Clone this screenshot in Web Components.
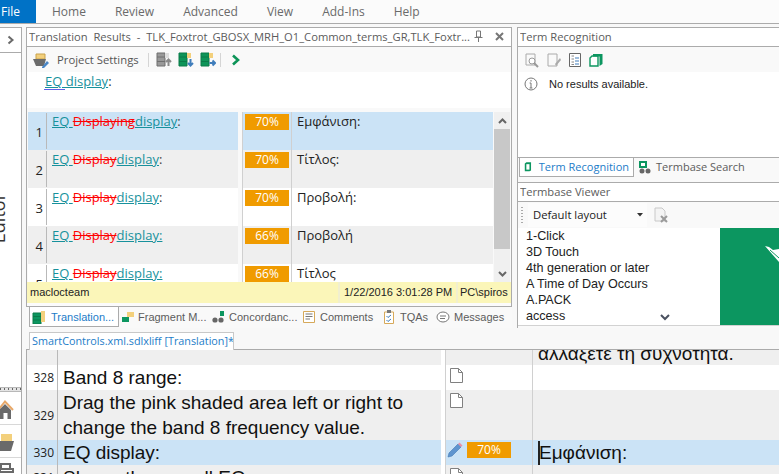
<!DOCTYPE html>
<html>
<head>
<meta charset="utf-8">
<title>Translation Results</title>
<style>
  html, body { margin: 0; height: 100%; overflow: hidden; background: #f8f8f8; }
  body { font-family: "Open Sans", "Noto Sans", sans-serif; font-size: 12px; color: #1e1e1e; }
</style>
</head>
<body>
<app-shell>
  <app-ribbon slot="ribbon"></app-ribbon>
  <side-rail slot="rail"></side-rail>
  <results-panel slot="results"></results-panel>
  <term-panel slot="term"></term-panel>
  <bottom-tabs slot="tabs"></bottom-tabs>
  <doc-tab slot="doc">SmartControls.xml.sdlxliff [Translation]*</doc-tab>
  <editor-grid slot="editor">
    <seg-row h="15" n="" tgt="αλλάξετε τη συχνότητα." tone="gray" clipped></seg-row>
    <seg-row h="25" n="328" src="Band 8 range:" tone="white" doc></seg-row>
    <seg-row h="50" n="329" src="Drag the pink shaded area left or right to change the band 8 frequency value." tone="gray" doc></seg-row>
    <seg-row h="25" n="330" src="EQ display:" tgt="Εμφάνιση:" tone="blue" active></seg-row>
    <seg-row h="25" n="331" src="Shows the overall EQ" tone="gray" doc></seg-row>
  </editor-grid>
</app-shell>

<script>
const SAMPLE_DIFF = (del, tail) => `<u>EQ </u><s>${del}</s><u>display${tail ? ':' : ''}</u>${tail ? '' : ':'}`
const NARROW = '"Liberation Sans", Arial, sans-serif'

class AppShell extends HTMLElement {
  constructor() {
    super()
    this.attachShadow({ mode: 'open' }).innerHTML = `
      <style>
        :host { display: grid; width: 779px; height: 474px; overflow: hidden;
          grid-template-columns: 26px 491px 262px;
          grid-template-rows: 24px 3px 279px 22px 22px 1fr; }
        .ribbon { grid-column: 1 / -1; grid-row: 1; }
        .rail { grid-column: 1; grid-row: 3 / -1; min-height: 0; }
        .results { grid-column: 2; grid-row: 3; min-height: 0; }
        .term { grid-column: 3; grid-row: 3 / 5; min-height: 0; }
        .tabs { grid-column: 2; grid-row: 4; }
        .doc { grid-column: 2 / -1; grid-row: 5; }
        .editor { grid-column: 2 / -1; grid-row: 6; min-height: 0; }
      </style>
      <div class="ribbon"><slot name="ribbon"></slot></div>
      <div class="rail"><slot name="rail"></slot></div>
      <div class="results"><slot name="results"></slot></div>
      <div class="term"><slot name="term"></slot></div>
      <div class="tabs"><slot name="tabs"></slot></div>
      <div class="doc"><slot name="doc"></slot></div>
      <div class="editor"><slot name="editor"></slot></div>`
  }
}

class AppRibbon extends HTMLElement {
  constructor() {
    super()
    const items = ['Home', 'Review', 'Advanced', 'View', 'Add-Ins', 'Help']
    this.attachShadow({ mode: 'open' }).innerHTML = `
      <style>
        :host { display: flex; height: 24px; box-sizing: border-box; background: #fbfbfb;
          border-bottom: 1px solid #ababab; font-size: 12px; color: #6a6a6a; }
        .file { width: 36px; height: 23px; background: #0072c6; color: #fff; line-height: 23px;
          padding-left: 1px; box-sizing: border-box; overflow: hidden; }
        nav { display: flex; margin-left: 16px; gap: 29px; line-height: 23px; }
      </style>
      <div class="file">File</div>
      <nav>${items.map(i => `<span>${i}</span>`).join('')}</nav>`
  }
}

class SideRail extends HTMLElement {
  constructor() {
    super()
    this.attachShadow({ mode: 'open' }).innerHTML = `
      <style>
        :host { display: block; height: 100%; }
        .col { width: 21px; height: 100%; background: #fff; border-right: 1px solid #ababab; border-top: 1px solid #ababab; box-sizing: content-box;
          display: flex; flex-direction: column; overflow: hidden; }
        .chev { height: 24px; border-bottom: 1px solid #ababab; display: flex; align-items: center; justify-content: center; flex: none; }
        .ed { margin-top: 140px; height: 52px; width: 10px; flex: none; }
        .ed span { display: block; writing-mode: vertical-rl; transform: rotate(180deg); font-size: 18px;
          line-height: 22px; width: 22px; margin-left: -13px; color: #333; }
        .spacer { flex: 1; background: #fff; }
        .grip { flex: none; height: 3px; background: #e4e4e4; border-top: 1px solid #b8b8b8; border-bottom: 1px solid #b8b8b8;
          background-image: repeating-linear-gradient(90deg, #666 0 1px, transparent 1px 4px); background-size: 100% 2px; background-repeat: no-repeat; }
        .nav { flex: none; height: 32px; border-bottom: 1px solid #d8d8d8; overflow: hidden; background: #fff; }
        .nav svg { display: block; }
      </style>
      <div class="col">
        <div class="chev"><svg width="8" height="10" viewBox="0 0 8 10"><path d="M1.5 1.5 5.5 5 1.5 8.5" fill="none" stroke="#6a6a6a" stroke-width="2"/></svg></div>
        <div class="ed"><span>Editor</span></div>
        <div class="spacer"></div>
        <div class="grip"></div>
        <div class="nav"><svg width="21" height="32" viewBox="0 0 21 32"><path d="M-1 17 5 9.5 13 18" fill="none" stroke="#e8a869" stroke-width="2"/><path d="M0 17 5 12 11 18V27H7.5V21H3.5V27H0Z" fill="#6a6a6a"/></svg></div>
        <div class="nav"><svg width="21" height="31" viewBox="0 0 21 31"><path d="M1 9H12V16H1Z" fill="#f3d07c"/><path d="M0 16H14L11 26H0Z" fill="#6a6a6a"/></svg></div>
        <div class="nav" style="height:17px;border:0"><svg width="21" height="17" viewBox="0 0 21 17"><path d="M1 6H10V11H1ZM0 11H13V14H0Z" fill="none" stroke="#6a6a6a" stroke-width="2"/></svg></div>
      </div>`
  }
}

class PanelTitle extends HTMLElement {
  constructor() {
    super()
    this.attachShadow({ mode: 'open' }).innerHTML = `
      <style>
        :host { display: flex; align-items: center; height: 20px; box-sizing: border-box; background: #fff;
          border: 1px solid #ababab; border-width: 1px 0; padding: 0 0 2px 2px; font-size: 11.2px; color: #5c5c5c;
          white-space: nowrap; overflow: hidden; }
        .t { flex: 1; overflow: hidden; }
        .b { display: flex; gap: 12px; align-items: center; padding-right: 7px; }
      </style>
      <span class="t"><slot></slot></span>
      <span class="b"><slot name="btns"></slot></span>`
  }
}

class ResultsPanel extends HTMLElement {
  constructor() {
    super()
    const rows = [
      ['1', SAMPLE_DIFF('Displaying', false), '70%', 'Εμφάνιση:', 'blue'],
      ['2', SAMPLE_DIFF('Display', false), '70%', 'Τίτλος:', 'gray'],
      ['3', SAMPLE_DIFF('Display', false), '70%', 'Προβολή:', 'white'],
      ['4', SAMPLE_DIFF('Display', true), '66%', 'Προβολή', 'gray'],
      ['5', SAMPLE_DIFF('Display', true), '66%', 'Τίτλος', 'white'],
    ]
    this.attachShadow({ mode: 'open' }).innerHTML = `
      <style>
        :host { display: flex; flex-direction: column; height: 279px; width: 486px; box-sizing: border-box; border-left: 1px solid #ababab; border-right: 1px solid #ababab; background: #fbfbfb; overflow: hidden; }
        .tb { height: 25px; background: #f9f9f9; display: flex; align-items: center; padding-left: 6px; flex: none; }
        .tb span { margin: 0 8px 0 8px; color: #555; font-size: 11.3px; white-space: nowrap; width: 83px; overflow: hidden; }
        .sep { width: 1px; height: 14px; background: #d5d5d5; margin: 0 7px 0 0; flex: none; }
        .tb svg { flex: none; margin-right: 6px; }
        .q { height: 36px; flex: none; padding: 0 0 0 18px; font-size: 13px; line-height: 18px; background: #fff; color: #333; position: relative; }
        .q u { color: #17919c; text-decoration-color: #17919c; }
        .q i { position: absolute; left: 17px; top: 17px; width: 21px; height: 1px; background: #5f5fe8; }
        .grid { height: 174px; flex: none; display: flex; background: #f9f9f9; padding: 4px 0 0 1px; box-sizing: border-box; overflow: hidden; }
        .rows { width: 465px; height: 170px; overflow: hidden; flex: none; }
        .sb { width: 16px; margin-left: 1px; height: 170px; background: #f0f0f0; display: flex; flex-direction: column; align-items: center; flex: none; }
        .sb i { display: flex; height: 17px; align-items: center; justify-content: center; }
        .sb b { display: block; width: 100%; height: 120px; background: #c8c8c8; margin-bottom: 16px; }
        .status { height: 21px; flex: none; display: flex; background: #fbf6b9; padding-left: 1px; line-height: 21px; color: #222; font: 11px/21px ${NARROW}; }
        .status span { padding: 0 0 0 4px; border-left: 2px solid #f1efcf; white-space: nowrap; box-sizing: border-box; }
        .status span:first-child { width: 310px; border: 0; padding-left: 2px; }
        .status span:nth-child(2) { width: 118px; }
        .status span:nth-child(3) { padding-left: 2px; }
      </style>
      <panel-title>Translation&nbsp; Results&nbsp; -&nbsp; TLK_Foxtrot_GBOSX_MRH_O1_Common_terms_GR,TLK_Foxtr...
        <svg slot="btns" width="9" height="12" viewBox="0 0 9 12"><path d="M2.5 1H6.5V7H2.5ZM.5 7.5H8.5M4.5 8V12" fill="none" stroke="#777"/></svg>
        <svg slot="btns" width="9" height="9" viewBox="0 0 9 9"><path d="M1 1 8 8M8 1 1 8" stroke="#777" stroke-width="2"/></svg>
      </panel-title>
      <div class="tb">
        <svg width="16" height="16" viewBox="0 0 16 16" style="margin-right:0"><path d="M3 2H12V7H3Z" fill="#f3d07c" stroke="#c9a24d"/><path d="M0 7H13L11 14H3Z" fill="#6b6b6b"/><path d="M9 15 14 9 16 11 11 16H9Z" fill="#4a86c5"/></svg>
        <span>Project Settings</span>
        <i class="sep"></i>
        <svg width="16" height="15" viewBox="0 0 16 15"><path d="M1 1H9V14H1ZM1 5H9M1 9.5H9" fill="#999" stroke="#6f6f6f"/><path d="M9 1H13V6H9Z" fill="#ddd"/><path d="M12.5 14V8M10 10 12.5 7.5 15 10" fill="none" stroke="#8a8a8a" stroke-width="2"/></svg>
        <svg width="16" height="15" viewBox="0 0 16 15"><path d="M1 1H9V14H1ZM1 5H9M1 9.5H9" fill="#0d9458" stroke="#0a7a49"/><path d="M9 1H13V6H9Z" fill="#f3d07c"/><path d="M12.5 7V13M10 11 12.5 13.5 15 11" fill="none" stroke="#3f7dbb" stroke-width="2"/></svg>
        <svg width="16" height="15" viewBox="0 0 16 15"><path d="M1 1H9V14H1ZM1 5H9M1 9.5H9" fill="#0d9458" stroke="#0a7a49"/><path d="M9 1H13V6H9Z" fill="#f3d07c"/><path d="M9.5 11H15M12.5 8.5 15 11 12.5 13.5" fill="none" stroke="#3f7dbb" stroke-width="2"/></svg>
        <i class="sep" style="margin:0 10px 0 -2px"></i>
        <svg width="10" height="12" viewBox="0 0 10 12"><path d="M2 1.5 7 6 2 10.5" fill="none" stroke="#0d9458" stroke-width="2.6"/></svg>
      </div>
      <div class="q"><u>EQ display</u>:<i></i></div>
      <div class="grid">
        <div class="rows">${rows.map(r => `<match-row n="${r[0]}" pct="${r[2]}" tgt="${r[3]}" tone="${r[4]}">${r[1]}</match-row>`).join('')}</div>
        <div class="sb">
          <i><svg width="9" height="6" viewBox="0 0 9 6"><path d="M1 5 4.5 1.5 8 5" fill="none" stroke="#666" stroke-width="2"/></svg></i>
          <b></b>
          <i><svg width="9" height="6" viewBox="0 0 9 6"><path d="M1 1 4.5 4.5 8 1" fill="none" stroke="#666" stroke-width="2"/></svg></i>
        </div>
      </div>
      <div class="status"><span>maclocteam</span><span>1/22/2016 3:01:28 PM</span><span>PC\\spiros</span></div>`
  }
}

class MatchRow extends HTMLElement {
  connectedCallback() {
    if (this.shadowRoot) return
    const tones = { blue: '#cbe3f6', gray: '#efefef', white: '#fff' }
    const bg = tones[this.getAttribute('tone')] ?? '#fff'
    this.attachShadow({ mode: 'open' }).innerHTML = `
      <style>
        :host { display: grid; grid-template-columns: 210px 5px 49px 1fr; height: 38px; font-size: 13px; line-height: 18px; flex: none; }
        .c { background: ${bg}; overflow: hidden; }
        .src { display: grid; grid-template-columns: 19px 1fr; }
        .n { display: flex; align-items: center; justify-content: flex-end; border-right: 1px solid #b9b9b9; padding: 1px 3px 0 0; box-sizing: border-box; margin: 1px 0; color: #222; }
        .d { padding: 0 0 0 5px; white-space: nowrap; color: #444; }
        .gap { background: #f9f9f9; border-right: 1px solid #d0d0d0; }
        .pct { border-right: 1px solid #d0d0d0; padding: 2px 0 0 2px; box-sizing: border-box; }
        .pct b { display: block; width: 44px; height: 16px; background: #f09b00; color: #fff; text-align: center; font: 12px/16px "Open Sans", sans-serif; }
        .tgt { padding-left: 5px; color: #222; white-space: nowrap; }
      </style>
      <div class="c src"><div class="n">${this.getAttribute('n')}</div><div class="d"><slot></slot></div></div>
      <div class="gap"></div>
      <div class="c pct"><b>${this.getAttribute('pct')}</b></div>
      <div class="c tgt">${this.getAttribute('tgt')}</div>`
    this.querySelectorAll('u').forEach(u => { u.style.color = '#17919c' })
    this.querySelectorAll('s').forEach(s => { s.style.color = '#f00' })
  }
}

class TermPanel extends HTMLElement {
  constructor() {
    super()
    const terms = ['1-Click', '3D Touch', '4th generation or later', 'A Time of Day Occurs', 'A.PACK', 'access']
    this.attachShadow({ mode: 'open' }).innerHTML = `
      <style>
        :host { display: flex; flex-direction: column; height: 301px; background: #f9f9f9; overflow: hidden; border-left: 1px solid #ababab; box-sizing: border-box; }
        panel-title { flex: none; }
        .tb { height: 25px; flex: none; background: #f9f9f9; display: flex; align-items: center; gap: 8px; padding-left: 7px; }
        .body { height: 85px; flex: none; background: #fff; display: flex; align-items: flex-start; padding: 5px 0 0 6px; gap: 10px; color: #222; line-height: 14px; box-sizing: border-box; font: 11px/14px ${NARROW}; }
        .body span { margin-left: 1px; }
        .tabs { flex: none; height: 25px; display: flex; border-top: 1px solid #ababab; background: #f9f9f9; box-sizing: border-box; padding-left: 1px; font-size: 11px; color: #5c5c5c; }
        .tab { height: 19px; display: flex; align-items: center; gap: 4px; padding: 0 4px 2px; box-sizing: border-box; white-space: nowrap; }
        .tab.on { width: 115px; background: #fff; border: 1px solid #ababab; border-top: 0; color: #1c7cc8; padding-left: 4px; gap: 7px; }
        .tb2 { height: 26px; flex: none; display: flex; align-items: center; background: #f9f9f9; padding-bottom: 1px; box-sizing: border-box; }
        .grip { width: 2px; height: 16px; margin: 0 7px 0 3px; background: repeating-linear-gradient(#aaa 0 1px, transparent 1px 3px); }
        .sel { width: 119px; height: 24px; background: #fcfcfc; display: flex; align-items: center; justify-content: space-between; padding: 0 4px 0 5px; box-sizing: border-box; color: #222; margin-right: 7px; margin-left: -2px; font-size: 11.3px; }
        .list { height: 98px; flex: none; display: flex; background: #fff; border-bottom: 1px solid #d2d2d2; box-sizing: border-box; }
        .terms { width: 202px; padding: 0 0 0 8px; box-sizing: border-box; font: 12.6px/16px ${NARROW}; color: #222; position: relative; white-space: nowrap; }
        .terms svg { position: absolute; left: 142px; top: 86px; }
        .thumb { flex: 1; background: #0c9660; overflow: hidden; }
      </style>
      <panel-title>Term Recognition</panel-title>
      <div class="tb">
        <svg width="14" height="16" viewBox="0 0 14 16"><path d="M1 2H10V13H1Z" fill="none" stroke="#aaa"/><circle cx="7" cy="9" r="3" fill="#fff" stroke="#999"/><path d="M9 11 13 15" stroke="#999" stroke-width="2"/></svg>
        <svg width="14" height="16" viewBox="0 0 14 16"><path d="M1 2H10V14H1Z" fill="none" stroke="#aaa"/><path d="M8 12 13 6 14 8 9 14Z" fill="#aaa"/></svg>
        <svg width="12" height="14" viewBox="0 0 12 14"><path d="M.5.5H11.5V13.5H.5Z" fill="#fff" stroke="#666"/><path d="M2.5 3H5M2.5 6H5M2.5 9H5M2.5 11.5H5" stroke="#888"/><path d="M6 5H10M6 8H10M6 11H10" stroke="#3f7dbb"/></svg>
        <svg width="14" height="14" viewBox="0 0 14 14"><path d="M1 5 3 3H9V13H1Z" fill="#fff" stroke="#0c9660" stroke-width="1.4"/><path d="M4 1H13.5V11L10.5 13V3.6H4Z" fill="#0c9660"/></svg>
      </div>
      <div class="body">
        <svg width="14" height="14" viewBox="0 0 14 14" style="flex:none"><circle cx="7" cy="7" r="6" fill="none" stroke="#777"/><path d="M7 3V4.6M7 6V11M5.6 6H7M5.6 11H8.4" stroke="#777"/></svg>
        <span>No results available.</span>
      </div>
      <div class="tabs">
        <div class="tab on"><svg width="10" height="13" viewBox="0 0 10 13"><path d="M1 2.5 3 1H9V11.5L7 12.5H1Z" fill="#0c9660"/><path d="M3 3.5H7V10.5H3Z" fill="#fff"/></svg>Term Recognition</div>
        <div class="tab"><svg width="14" height="14" viewBox="0 0 14 14"><path d="M1 1H9V8H1Z" fill="#0c9660"/><path d="M3 3H7V6H3Z" fill="#fff"/><circle cx="4" cy="11" r="2.5" fill="#666"/><circle cx="10" cy="11" r="2.5" fill="#666"/></svg>Termbase Search</div>
      </div>
      <panel-title>Termbase Viewer</panel-title>
      <div class="tb2">
        <i class="grip"></i>
        <div class="sel">Default layout<svg width="6" height="4" viewBox="0 0 6 4"><path d="M0 0H6L3 3.5Z" fill="#333"/></svg></div>
        <svg width="15" height="16" viewBox="0 0 15 16"><path d="M1 1H8L11 4V14H1Z" fill="#f4f4f4" stroke="#c8c8c8"/><path d="M7 9 13 15M13 9 7 15" stroke="#9a9a9a" stroke-width="2"/></svg>
      </div>
      <div class="list">
        <div class="terms">${terms.map(t => `<div>${t}</div>`).join('')}
          <svg width="10" height="7" viewBox="0 0 10 7"><path d="M1 1 5 5 9 1" fill="none" stroke="#4a5160" stroke-width="2"/></svg>
        </div>
        <div class="thumb"><svg width="59" height="97" viewBox="0 0 59 97"><path d="M45 18 49 19 53 22 59 21 59 34 Z" fill="#fff"/><path d="M50 22 59 30" stroke="#0c9660"/></svg></div>
      </div>`
  }
}

class BottomTabs extends HTMLElement {
  constructor() {
    super()
    this.attachShadow({ mode: 'open' }).innerHTML = `
      <style>
        :host { display: flex; height: 22px; box-sizing: border-box; border-top: 1px solid #ababab; background: #f9f9f9; padding-left: 3px; width: 486px; font: 11px ${NARROW}; color: #5c5c5c; white-space: nowrap; }
        .t { height: 20px; display: flex; align-items: center; gap: 3px; padding: 0 3px; box-sizing: border-box; flex: none; }
        .on { width: 90px; background: #fff; border: 1px solid #ababab; border-top: 0; color: #1c7cc8; padding-left: 2px; gap: 5px; }
        svg { flex: none; }
      </style>
      <div class="t on"><svg width="14" height="14" viewBox="0 0 14 14"><path d="M1 3H9V14H1ZM1 6.5H9M1 10H9" fill="#0c9660" stroke="#0a7a49"/><path d="M9 1H13V12H9Z" fill="#f3d07c"/></svg>Translation...</div>
      <div class="t" style="width:90px"><svg width="13" height="12" viewBox="0 0 13 12"><path d="M5 1H12V6H5Z" fill="#f3d07c"/><path d="M0 6H7V11H0Z" fill="#0c9660"/></svg>Fragment M...</div>
      <div class="t" style="width:91px;gap:2px"><svg width="15" height="14" viewBox="0 0 15 14"><path d="M8 1H12V6H8Z" fill="#0c9660"/><circle cx="3" cy="10" r="2.6" fill="#666"/><circle cx="9" cy="10" r="2.6" fill="#666"/></svg>Concordanc...</div>
      <div class="t" style="width:81px;gap:5px"><svg width="12" height="12" viewBox="0 0 12 12"><path d="M.5.5H11.5V11.5H.5Z" fill="#fff" stroke="#d6a95a"/><path d="M2.5 3H9.5M2.5 5.5H9.5M2.5 8H7" stroke="#777"/></svg>Comments</div>
      <div class="t" style="width:52px;gap:6px"><svg width="10" height="14" viewBox="0 0 10 14"><path d="M.5 2H9.5V13.5H.5Z" fill="#fff" stroke="#d6a95a"/><path d="M3 0H7V3H3Z" fill="#777"/><path d="M2.5 6 4 7.5 7 5M2.5 10 4 11.5 7 9" fill="none" stroke="#3f7dbb"/></svg>TQAs</div>
      <div class="t" style="gap:4px"><svg width="14" height="13" viewBox="0 0 14 13"><ellipse cx="7" cy="6" rx="6" ry="5" fill="#fff" stroke="#777"/><path d="M4 5H10M4 7.5H9" stroke="#777"/></svg>Messages</div>`
  }
}

class DocTab extends HTMLElement {
  constructor() {
    super()
    this.attachShadow({ mode: 'open' }).innerHTML = `
      <style>
        :host { display: flex; align-items: flex-end; height: 22px; box-sizing: border-box; background: #f8f8f8; border-bottom: 1px solid #ababab; padding-left: 3px; }
        div { height: 18px; width: 205px; margin-bottom: -1px; box-sizing: border-box; background: #fff; border: 1px solid #c8c8c8; border-bottom: 0; color: #1c7cc8; padding-left: 2px; font-size: 10.8px; line-height: 16px; white-space: nowrap; overflow: hidden; }
      </style>
      <div><slot></slot></div>`
  }
}

class EditorGrid extends HTMLElement {
  constructor() {
    super()
    this.attachShadow({ mode: 'open' }).innerHTML = `
      <style>:host { display: flex; flex-direction: column; height: 100%; overflow: hidden; background: #fff; border-left: 1px solid #ababab; box-sizing: border-box; }</style>
      <slot></slot>`
  }
}

class SegRow extends HTMLElement {
  connectedCallback() {
    if (this.shadowRoot) return
    const tones = { blue: '#cbe3f6', gray: '#efefef', white: '#fff' }
    const bg = tones[this.getAttribute('tone')] ?? '#fff'
    const active = this.hasAttribute('active')
    const doc = this.hasAttribute('doc')
    const clipped = this.hasAttribute('clipped')
    const tgt = this.getAttribute('tgt') ?? ''
    this.attachShadow({ mode: 'open' }).innerHTML = `
      <style>
        :host { display: grid; grid-template-columns: 31px 1fr; flex: none; height: ${this.getAttribute('h')}px; overflow: hidden; }
        .n { background: ${bg}; border-right: 1px solid #b9b9b9; font-size: 12px; color: #222; display: flex; align-items: center; justify-content: flex-end; padding-right: 3px; box-sizing: border-box; }
        .rest { display: grid; grid-template-columns: 383px 4px 87px 1px 1fr; }
        .c { background: ${bg}; }
        .src { font: 19px/25px "Liberation Sans", Arial, sans-serif; color: #111; padding: 0 0 0 5px; }
        .g { background: #fff; }
        .st { border-left: 1px solid #d0d0d0; display: flex; align-items: flex-start; gap: 4px; padding: 2px 0 0 1px; box-sizing: border-box; }
        .st b { display: block; width: 44px; height: 16px; background: #f09b00; color: #fff; font: 12px/16px "Open Sans", sans-serif; text-align: center; font-weight: 400; }
        .l { background: #d0d0d0; }
        .tgt { font: 19px/25px "Liberation Sans", Arial, sans-serif; color: #111; padding-left: 5px; white-space: nowrap; overflow: hidden; }
        .caret { display: inline-block; width: 2px; height: 24px; background: #222; vertical-align: -6px; margin-right: -1px; }
        .tail { display: block; margin-top: -9px; }
      </style>
      <div class="n">${this.getAttribute('n')}</div>
      <div class="rest">
        <div class="c src">${this.getAttribute('src') ?? ''}</div>
        <div class="g"></div>
        <div class="c st">${doc ? `<svg width="13" height="15" viewBox="0 0 13 15" style="margin:1px 0 0 3px"><path d="M.5.5H8.5L12.5 4.5V14.5H.5Z" fill="#fff" stroke="#808080"/><path d="M8.5.5V4.5H12.5" fill="none" stroke="#808080"/></svg>` : ''}${active ? `<svg width="16" height="16" viewBox="0 0 16 16"><path d="M1 15 2 11 11 2 14 5 5 14Z" fill="#5f95cf" stroke="#4179b4" stroke-width=".6"/><path d="M11 2 12.5.5 15.5 3.5 14 5Z" fill="#e891a8"/></svg><b>70%</b>` : ''}</div>
        <div class="l"></div>
        <div class="c tgt">${active ? '<i class="caret"></i>' : ''}${clipped ? `<span class="tail">${tgt}</span>` : tgt}</div>
      </div>`
  }
}

customElements.define('panel-title', PanelTitle)
customElements.define('app-shell', AppShell)
customElements.define('app-ribbon', AppRibbon)
customElements.define('side-rail', SideRail)
customElements.define('results-panel', ResultsPanel)
customElements.define('match-row', MatchRow)
customElements.define('term-panel', TermPanel)
customElements.define('bottom-tabs', BottomTabs)
customElements.define('doc-tab', DocTab)
customElements.define('editor-grid', EditorGrid)
customElements.define('seg-row', SegRow)
</script>
</body>
</html>
